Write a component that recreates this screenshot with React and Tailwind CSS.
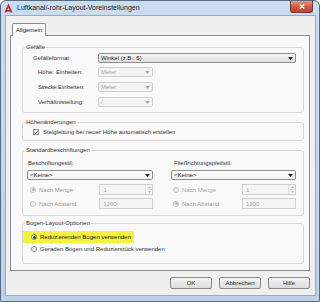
import React from "react";

function Arrow({ disabled }) {
  return (
    <svg width="5" height="3" viewBox="0 0 5 3" className="shrink-0">
      <path d="M0 0 H5 L2.5 3 Z" fill={disabled ? "#a8a8a8" : "#222"} />
    </svg>
  );
}

function Combo({ text, w, disabled, light }) {
  return (
    <div
      className={`${w} h-[10px] flex items-center justify-between pl-[2px] pr-[2px] rounded-[2px] border ${
        disabled
          ? "border-[#cfcfcf] bg-[#f4f4f4] text-[#a0a0a0]"
          : light
          ? "border-[#8f8f8f] bg-gradient-to-b from-[#ffffff] to-[#f0f0f0] text-[#222]"
          : "border-[#8f8f8f] bg-gradient-to-b from-[#f6f6f6] to-[#dedede] text-[#222]"
      }`}
    >
      <span>{text}</span>
      <Arrow disabled={disabled} />
    </div>
  );
}

function Spin({ text, w }) {
  return (
    <div className={`${w} h-[11px] flex items-stretch border border-[#cfcfcf] bg-[#f5f5f5] text-[#a0a0a0]`}>
      <div className="flex-1 flex items-center pl-[3px]">{text}</div>
      <div className="w-[7px] flex flex-col border-l border-[#dcdcdc]">
        <div className="flex-1 flex items-center justify-center">
          <svg width="3" height="2" viewBox="0 0 3 2"><path d="M0 2 L1.5 0 L3 2Z" fill="#b8b8b8" /></svg>
        </div>
        <div className="flex-1 flex items-center justify-center border-t border-[#e2e2e2]">
          <svg width="3" height="2" viewBox="0 0 3 2"><path d="M0 0 L1.5 2 L3 0Z" fill="#b8b8b8" /></svg>
        </div>
      </div>
    </div>
  );
}

function TextBox({ text, w }) {
  return (
    <div className={`${w} h-[11px] flex items-center pl-[3px] border border-[#cfcfcf] bg-[#f5f5f5] text-[#a0a0a0]`}>
      {text}
    </div>
  );
}

function Radio({ checked, disabled }) {
  return (
    <span
      className={`w-[6px] h-[6px] rounded-full border flex items-center justify-center shrink-0 ${
        disabled ? "border-[#c6c6c6] bg-[#f2f2f2]" : "border-[#8a8a8a] bg-gradient-to-b from-[#e8e8e8] to-[#ffffff]"
      }`}
    >
      {checked && (
        <span className={`w-[3px] h-[3px] rounded-full ${disabled ? "bg-[#b5b5b5]" : "bg-[#2c5a2c]"}`} />
      )}
    </span>
  );
}

function Group({ title, children, className }) {
  return (
    <fieldset className={`border border-[#d5d9dd] rounded-[3px] px-[2px] ${className}`}>
      <legend className="px-[1px] leading-[8px] text-[#333]">{title}</legend>
      {children}
    </fieldset>
  );
}

function Btn({ children }) {
  return (
    <div className="w-[42px] h-[12px] flex items-center justify-center rounded-[2px] border border-[#8a8a8a] bg-gradient-to-b from-[#f4f4f4] to-[#dcdcdc] text-[#222]">
      {children}
    </div>
  );
}

export default function App() {
  return (
    <div className="w-[320px] h-[302px] flex flex-col border border-[#5b6b7c] rounded-t-[6px] bg-gradient-to-b from-[#c9ddf1] to-[#bcd2e9] font-['Liberation_Sans',Arial,sans-serif] text-[6px] leading-[8px] text-[#333] overflow-hidden">
      {/* title bar */}
      <div className="h-[14px] flex items-start shrink-0">
        <div className="flex items-center h-[13px] pl-[3px]">
          <svg width="9" height="10" viewBox="0 0 9 10">
            <path d="M0.5 9.5 L4.5 0.5 L8.5 9.5 H6.6 L4.5 4.6 L2.4 9.5 Z" fill="#d0202a" />
            <path d="M3.2 7.2 H5.8 L6.3 8.4 H2.7 Z" fill="#8b1118" />
          </svg>
          <span className="ml-[4px] text-[7px] leading-[9px] text-[#1b1b1b]">Luftkanal/-rohr-Layout-Voreinstellungen</span>
        </div>
        <div className="ml-auto mr-[6px] w-[23px] h-[12px] rounded-b-[3px] border border-t-0 border-[#7a3a32] bg-gradient-to-b from-[#e39a8c] via-[#cf5a47] to-[#c2412c] flex items-center justify-center">
          <svg width="6" height="5" viewBox="0 0 6 5">
            <path d="M0.8 0.5 L5.2 4.5 M5.2 0.5 L0.8 4.5" stroke="#fff" strokeWidth="1.3" />
          </svg>
        </div>
      </div>

      {/* content */}
      <div className="ml-[4px] mr-[3px] mb-[5px] border border-[#99aabb] bg-[#f0f0f0] pt-[7px] pl-[4px] pr-[5px] pb-[6px] flex flex-col">
        <div className="flex">
          <div className="ml-[2px] w-[34px] h-[13px] -mb-px relative z-10 border border-b-0 border-[#898c95] bg-[#f9f9f9] rounded-t-[2px] flex items-center pl-[3px] text-[#222]">
            Allgemein
          </div>
        </div>
        <div className="border border-[#898c95] bg-[#f9f9f9] pl-[11px] pr-[5px] pb-[6px] flex flex-col">
          <Group title="Gefälle" className="mt-[7px] pb-[5px]">
            <div className="pt-[2px] flex flex-col">
              <div className="flex items-center h-[10px] pl-[8px] pr-[5px]">
                <span className="w-[65px]">Gefälleformat:</span>
                <Combo text="Winkel (z.B.: 5)" w="flex-1" />
              </div>
              <div className="flex items-center h-[10px] pl-[13px] mt-[4px]">
                <span className="w-[18px]">Höhe:</span>
                <span className="w-[42px]">Einheiten:</span>
                <Combo text="Meter" w="w-[55px]" disabled />
              </div>
              <div className="flex items-center h-[10px] pl-[13px] mt-[5px]">
                <span className="w-[20px] whitespace-nowrap tracking-[-0.3px]">Strecke:</span>
                <span className="w-[40px] whitespace-nowrap">Einheiten:</span>
                <Combo text="Meter" w="w-[55px]" disabled />
              </div>
              <div className="flex items-center h-[10px] pl-[13px] mt-[5px]">
                <span className="w-[60px]">Verhältnisteilung:</span>
                <Combo text="/" w="w-[55px]" disabled />
              </div>
            </div>
          </Group>

          <Group title="Höhenänderungen" className="mt-[5px] pb-[4px]">
            <div className="mt-[2px] h-[8px] flex items-center pl-[8px]">
              <span className="w-[6px] h-[6px] border border-[#8a8a8a] bg-[#fdfdfd] flex items-center justify-center shrink-0">
                <svg width="5" height="5" viewBox="0 0 5 5">
                  <path d="M0.6 2.6 L2 4 L4.5 0.8" stroke="#333" strokeWidth="1" fill="none" />
                </svg>
              </span>
              <span className="ml-[4px]">Steigleitung bei neuer Höhe automatisch erstellen</span>
            </div>
          </Group>

          <Group title="Standardbeschriftungen" className="mt-[5px] pb-[6px]">
            <div className="flex pl-[2px] pr-[5px]">
              <div className="w-[126px] flex flex-col">
                <div className="mt-[5px] h-[8px] pl-[1px]">Beschriftungsstil:</div>
                <div className="mt-[3px]"><Combo text="<Keine>" w="w-full" light /></div>
                <div className="mt-[4px] h-[11px] flex items-center pl-[3px]">
                  <Radio checked disabled />
                  <span className="ml-[3px] w-[62px] text-[#9a9a9a]">Nach Menge</span>
                  <Spin text="1" w="w-[55px]" />
                </div>
                <div className="mt-[3px] h-[11px] flex items-center pl-[3px]">
                  <Radio disabled />
                  <span className="ml-[3px] w-[62px] text-[#9a9a9a]">Nach Abstand</span>
                  <TextBox text="1200" w="w-[55px]" />
                </div>
              </div>
              <div className="ml-auto w-[125px] flex flex-col">
                <div className="mt-[5px] h-[8px] pl-[3px]">Fließrichtungspfeilstil:</div>
                <div className="mt-[3px]"><Combo text="<Keine>" w="w-full" light /></div>
                <div className="mt-[4px] h-[11px] flex items-center pl-[2px]">
                  <Radio disabled />
                  <span className="ml-[3px] w-[61px] text-[#a8a8a8]">Nach Menge</span>
                  <Spin text="1" w="w-[55px]" />
                </div>
                <div className="mt-[3px] h-[11px] flex items-center pl-[2px]">
                  <Radio checked disabled />
                  <span className="ml-[3px] w-[61px] text-[#9a9a9a]">Nach Abstand</span>
                  <TextBox text="1200" w="w-[55px]" />
                </div>
              </div>
            </div>
          </Group>

          <Group title="Bogen-Layout-Optionen" className="mt-[3px] pb-[10px]">
            <div className="mt-[4px] flex">
              <div className="-ml-[2px] h-[12px] w-[111px] bg-[#f3f23c] flex items-center pl-[8px]">
                <Radio checked />
                <span className="ml-[3px] text-[#222]">Reduzierenden Bogen verwenden</span>
              </div>
            </div>
            <div className="mt-[2px] h-[8px] flex items-center pl-[6px]">
              <Radio />
              <span className="ml-[3px]">Geraden Bogen und Reduzierstück verwenden</span>
            </div>
          </Group>
        </div>

        <div className="mt-[6px] flex justify-end gap-[7px]">
          <Btn>OK</Btn>
          <Btn>Abbrechen</Btn>
          <Btn>Hilfe</Btn>
        </div>
      </div>
    </div>
  );
}
